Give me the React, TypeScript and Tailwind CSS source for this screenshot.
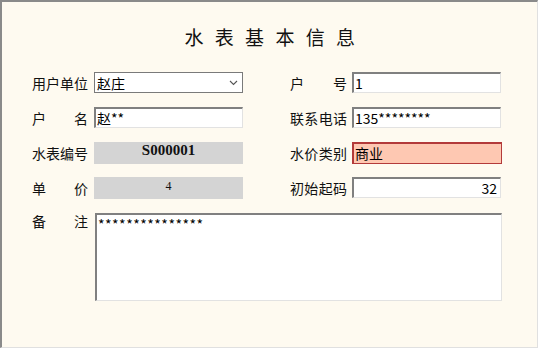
import type { ReactNode } from 'react'

const cjk = { fontFamily: '"Noto Sans CJK SC", "Noto Sans", sans-serif' }
const serif = { fontFamily: '"Liberation Serif", "Noto Sans CJK SC", serif' }

const sunken =
  'border-t-2 border-l-2 border-b border-r border-t-[#808080] border-l-[#808080] border-b-[#e2e2e2] border-r-[#e2e2e2] bg-white'

function Etiqueta({ texto, ancho = 'w-[56px]' }: { texto: string; ancho?: string }) {
  const chars = texto.split('')
  return (
    <div className={`${ancho} flex justify-between text-[14px] leading-none text-[#111]`}>
      {chars.map((c, i) => (
        <span key={i}>{c}</span>
      ))}
    </div>
  )
}

function Fila({ izq, der }: { izq: ReactNode; der: ReactNode }) {
  return (
    <div className="flex h-[21px] items-center">
      <div className="flex w-[258px] items-center">{izq}</div>
      <div className="flex items-center">{der}</div>
    </div>
  )
}

function Campo({ valor, derecha }: { valor: string; derecha?: boolean }) {
  return (
    <div
      className={`${sunken} ml-[5px] flex h-[21px] w-[149px] items-center px-[1px] text-[14px] leading-none text-black ${
        derecha ? 'justify-end pr-[3px]' : ''
      }`}
    >
      {valor}
    </div>
  )
}

export default function App() {
  return (
    <div className="h-[350px] w-[540px] bg-white" style={cjk}>
      <div className="h-[348px] w-[538px] border-t-2 border-l-2 border-b border-r border-t-[#8a8a8a] border-l-[#8a8a8a] border-b-[#e0e0e0] border-r-[#e0e0e0] bg-[#fefaf0]">
        <div className="flex h-[70px] justify-center pt-[23px]">
          <h1 className="pl-[4px] text-[19px] leading-[24px] tracking-[3.5px] text-[#111]">
            水 表 基 本 信 息
          </h1>
        </div>

        <div className="flex flex-col gap-[14px] pl-[30px]">
          <Fila
            izq={
              <>
                <Etiqueta texto="用户单位" />
                <div className="ml-[6px] flex h-[21px] w-[149px] items-center justify-between border border-[#7a7a7a] bg-white pl-[2px] pr-[4px] text-[14px] leading-none text-black">
                  <span>赵庄</span>
                  <svg width="9" height="6" viewBox="0 0 9 6" fill="none">
                    <path d="M1 1l3.5 3.5L8 1" stroke="#555" strokeWidth="1.1" />
                  </svg>
                </div>
              </>
            }
            der={
              <>
                <Etiqueta texto="户号" ancho="w-[57px]" />
                <Campo valor="1" />
              </>
            }
          />
          <Fila
            izq={
              <>
                <Etiqueta texto="户名" />
                <div className={`${sunken} ml-[6px] flex h-[21px] w-[149px] items-center px-[1px] text-[14px] leading-none text-black`}>
                  赵**
                </div>
              </>
            }
            der={
              <>
                <Etiqueta texto="联系电话" ancho="w-[57px]" />
                <Campo valor="135********" />
              </>
            }
          />
          <Fila
            izq={
              <>
                <Etiqueta texto="水表编号" />
                <div
                  className="ml-[6px] flex h-[22px] w-[149px] justify-center bg-[#d4d4d4] pt-[1px] text-[15px] font-bold leading-[15px] text-[#111]"
                  style={serif}
                >
                  S000001
                </div>
              </>
            }
            der={
              <>
                <Etiqueta texto="水价类别" ancho="w-[57px]" />
                <div className="ml-[5px] flex h-[22px] w-[150px] items-center border-2 border-b border-r border-[#b33a3a] bg-[#fec8b2] px-[1px] text-[14px] leading-none text-black">
                  商业
                </div>
              </>
            }
          />
          <Fila
            izq={
              <>
                <Etiqueta texto="单价" />
                <div
                  className="ml-[6px] flex h-[22px] w-[149px] justify-center bg-[#d4d4d4] pt-[3px] text-[12px] leading-[12px] text-[#111]"
                  style={serif}
                >
                  4
                </div>
              </>
            }
            der={
              <>
                <Etiqueta texto="初始起码" ancho="w-[57px]" />
                <Campo valor="32" derecha />
              </>
            }
          />
          <div className="mt-[1px] flex items-start">
            <div className="pt-[1px]">
              <Etiqueta texto="备注" />
            </div>
            <div className={`${sunken} ml-[7px] h-[88px] w-[407px] px-[1px] pt-[2px] text-[14px] leading-[14px] tracking-[0.5px] text-black`}>
              ***************
            </div>
          </div>
        </div>
      </div>
    </div>
  )
}
